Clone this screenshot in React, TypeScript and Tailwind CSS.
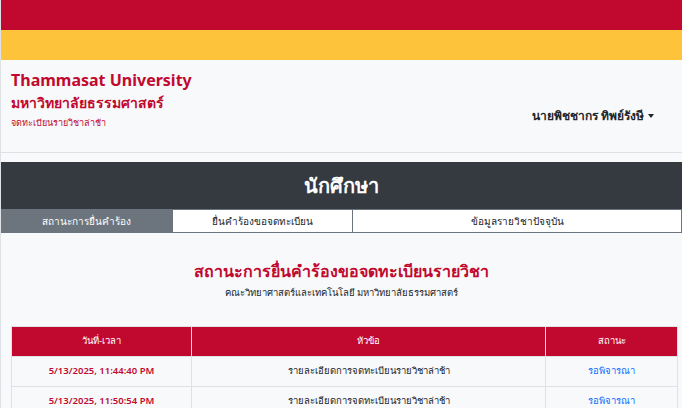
export default function App() {
  const rows = [
    { date: '5/13/2025, 11:44:40 PM', topic: 'รายละเอียดการจดทะเบียนรายวิชาล่าช้า', status: 'รอพิจารณา' },
    { date: '5/13/2025, 11:50:54 PM', topic: 'รายละเอียดการจดทะเบียนรายวิชาล่าช้า', status: 'รอพิจารณา' },
  ];

  return (
    <div className="w-[682px] h-[408px] overflow-hidden bg-[#f8f9fa] border-l border-[#dee2e6] font-['Noto_Sans','Liberation_Sans',sans-serif]">
      {/* top stripes */}
      <div className="h-[30px] bg-[#c1092f]"></div>
      <div className="h-[30px] bg-[#fdc43b]"></div>

      {/* header */}
      <div className="h-[93px] flex justify-between border-b border-[#dee2e6] px-[10px]">
        <div className="pt-[9px]">
          <div className="text-[16px] leading-[22px] font-bold text-[#c1092f]">Thammasat University</div>
          <div className="text-[14px] leading-[22px] font-semibold text-[#c1092f] mt-[1px]">มหาวิทยาลัยธรรมศาสตร์</div>
          <div className="text-[9px] leading-[14px] text-[#c1092f] mt-[2px]">จดทะเบียนรายวิชาล่าช้า</div>
        </div>
        <div className="flex items-center gap-[4px] pt-[20px] pr-[18px] text-[12px] font-semibold text-[#212529]">
          นายพิชชากร ทิพย์รังษี
          <span className="w-0 h-0 border-l-[3px] border-r-[3px] border-t-[4px] border-l-transparent border-r-transparent border-t-[#212529]"></span>
        </div>
      </div>

      {/* student bar */}
      <div className="mt-[9px] h-[47px] bg-[#343a40] flex items-center justify-center text-white text-[20px] font-semibold">
        นักศึกษา
      </div>

      {/* tabs */}
      <div className="flex h-[24px] text-[10px]">
        <div className="w-[171px] bg-[#6c757d] text-white flex items-center justify-center">สถานะการยื่นคำร้อง</div>
        <div className="w-[181px] bg-white text-[#212529] border border-[#6c757d] flex items-center justify-center">ยื่นคำร้องขอจดทะเบียน</div>
        <div className="flex-1 bg-white text-[#212529] border border-l-0 border-[#6c757d] flex items-center justify-center">ข้อมูลรายวิชาปัจจุบัน</div>
      </div>

      {/* title */}
      <div className="text-center pt-[24px]">
        <div className="text-[16px] leading-[28px] font-semibold text-[#c1092f]">สถานะการยื่นคำร้องขอจดทะเบียนรายวิชา</div>
        <div className="text-[9.5px] leading-[14px] text-[#212529] mt-[1px]">คณะวิทยาศาสตร์และเทคโนโลยี มหาวิทยาลัยธรรมศาสตร์</div>
      </div>

      {/* table */}
      <div className="pl-[10px] pr-[4px] pt-[26px]">
        <table className="w-full border-collapse text-[9.5px]">
          <thead>
            <tr className="bg-[#c1092f] text-white h-[30px]">
              <th className="w-[180px] border border-[#dee2e6] font-normal">วันที่-เวลา</th>
              <th className="w-[354px] border border-[#dee2e6] font-normal">หัวข้อ</th>
              <th className="border border-[#dee2e6] font-normal">สถานะ</th>
            </tr>
          </thead>
          <tbody>
            {rows.map((r, i) => (
              <tr key={i} className="h-[30px]">
                <td className="border border-[#dee2e6] text-center font-semibold text-[9.5px] text-[#c1092f]">{r.date}</td>
                <td className="border border-[#dee2e6] text-center text-[#212529]">{r.topic}</td>
                <td className="border border-[#dee2e6] text-center text-[#0d6efd]">{r.status}</td>
              </tr>
            ))}
          </tbody>
        </table>
      </div>
    </div>
  );
}
